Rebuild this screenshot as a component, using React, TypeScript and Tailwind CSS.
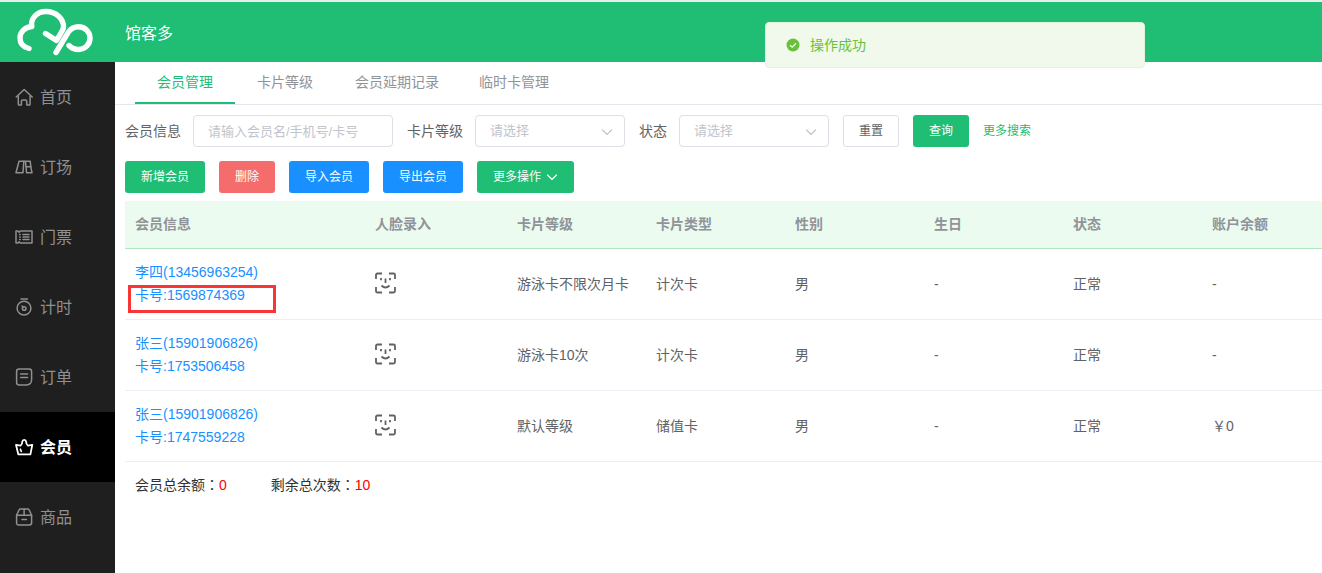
import React, { useState } from 'react';
import type { ReactNode } from 'react';

type IconProps = { children: ReactNode };

const MenuIcon = ({ children }: IconProps) => (
  <svg
    viewBox="0 0 20 20"
    className="size-5 shrink-0"
    fill="none"
    stroke="currentColor"
    strokeWidth="1.5"
    strokeLinecap="round"
    strokeLinejoin="round"
    aria-hidden="true"
  >
    {children}
  </svg>
);

const menus = [
  {
    name: '首页',
    icon: (
      <MenuIcon>
        <path d="M2.2 10 10.2 2.5 18.2 10" />
        <path d="M4.3 9v8.2q0 .8.8.8h2.3v-3.6q0-1.4 1.4-1.4h2.6q1.4 0 1.4 1.4V18h2.5q.8 0 .8-.8V9" />
      </MenuIcon>
    ),
  },
  {
    name: '订场',
    icon: (
      <MenuIcon>
        <path d="M5 4.2h4.800L9 15.800H2z" />
        <path d="M9.800 4.200h6.400l.6 5.400 1.200 6.200h-5.400L11.400 4.200" />
        <path d="M12.200 9.800h4.600" />
      </MenuIcon>
    ),
  },
  {
    name: '门票',
    icon: (
      <MenuIcon>
        <path d="M2 4h2l1.200 1.200L6.400 4H18v12H6.400l-1.200-1.200L4 16H2z" />
        <path d="M9 7.500h6M9 10h6M9 12.500h6M5.600 7.500h.6M5.600 10h.6M5.600 12.500h.6" />
      </MenuIcon>
    ),
  },
  {
    name: '计时',
    icon: (
      <MenuIcon>
        <circle cx="10" cy="11.200" r="6.900" />
        <circle cx="10.200" cy="11.500" r="1.800" />
        <path d="M7 2h6.400M8 9l1 1" />
      </MenuIcon>
    ),
  },
  {
    name: '订单',
    icon: (
      <MenuIcon>
        <path d="M5 2h10.200q2.400 0 2.400 2.400v8.200q0 5.400-5.400 5.400H5q-2.400 0-2.400-2.400V4.400Q2.600 2 5 2z" />
        <path d="M6.600 7h7M6.600 10.400h7" />
      </MenuIcon>
    ),
  },
  {
    name: '会员',
    icon: (
      <MenuIcon>
        <path
          strokeWidth="1.8"
          d="M2 7.800 6.500 8.600Q8.300 7.600 8.300 4.600 8.500 2.800 10.200 2.800T12.100 4.600Q12.100 7.600 14 8.600L18.300 7.800 16.400 17.400H4.300z"
        />
        <path strokeWidth="1.6" d="M6.400 12.200 7.300 14.400" />
      </MenuIcon>
    ),
  },
  {
    name: '商品',
    icon: (
      <MenuIcon>
        <path d="M2.600 8.200 5 3Q5.500 2 6.600 2h7q1.100 0 1.600 1l2.400 5.200v7.600q0 2.200-2.200 2.200H4.800q-2.200 0-2.200-2.200z" />
        <path d="M2.600 8.200h15M10.100 2v6M8 12.600h4.400" />
      </MenuIcon>
    ),
  },
];

const tabs = ['会员管理', '卡片等级', '会员延期记录', '临时卡管理'];

const columns = [
  { title: '会员信息', width: 'w-60' },
  { title: '人脸录入', width: 'w-[142px]' },
  { title: '卡片等级', width: 'w-[139px]' },
  { title: '卡片类型', width: 'w-[139px]' },
  { title: '性别', width: 'w-[139px]' },
  { title: '生日', width: 'w-[139px]' },
  { title: '状态', width: 'w-[139px]' },
  { title: '账户余额', width: '' },
];

const members = [
  { name: '李四', phone: '13456963254', card: '1569874369', level: '游泳卡不限次月卡', type: '计次卡', balance: '-', marked: true },
  { name: '张三', phone: '15901906826', card: '1753506458', level: '游泳卡10次', type: '计次卡', balance: '-', marked: false },
  { name: '张三', phone: '15901906826', card: '1747559228', level: '默认等级', type: '储值卡', balance: '￥0', marked: false },
];

const totals = [
  { label: '会员总余额', value: '0' },
  { label: '剩余总次数', value: '10' },
];

const Logo = () => (
  <svg viewBox="0 0 78 50" className="h-[50px] w-[78px]" fill="none" stroke="#fff" strokeWidth="5.400" strokeLinecap="round" strokeLinejoin="round" aria-label="馆客多">
    <path d="M13 41.500C7 40 4 36 4 31 4 25 9 20 15.800 19.500 14.500 11 21 4.500 30 4.500 40 4.500 48 12 47.500 20.500 47 23 45.500 25 40.500 33.500L29.500 26.500" />
    <path d="M40 45.500 52.500 24.800C55.500 21 59 19.800 62.500 19.800 69 19.800 74 25 74 31 74 37.500 69 42.500 62.500 42.500 58.500 42.500 55.500 41 53 38.500" />
  </svg>
);

const Chevron = () => (
  <svg viewBox="0 0 12 12" className="size-3 shrink-0" fill="none" stroke="currentColor" strokeWidth="1.200" strokeLinecap="round" aria-hidden="true">
    <path d="M1.500 4 6 8.500 10.500 4" />
  </svg>
);

const FaceIcon = () => (
  <svg viewBox="0 0 22 22" className="size-[22px]" fill="none" stroke="#606266" strokeWidth="1.800" aria-hidden="true">
    <path d="M1 7V3q0-1.500 1.500-1.500H7M14 1.500h4.500q1.500 0 1.500 1.500v4M20 15v4q0 1.500-1.500 1.500H14M7 20.500H2.500Q1 20.500 1 19v-4" />
    <path d="M6 6v2.200M15 6v2.200M10.500 6.500v4.500M6.500 13.500q4 4 8 0" />
  </svg>
);

type SelectProps = { id: string; label: string };

const FilterSelect = ({ id, label }: SelectProps) => (
  <div className="flex items-center gap-3">
    <label htmlFor={id}>{label}</label>
    <div className="relative">
      <select
        id={id}
        className="h-8 w-[150px] appearance-none rounded border border-[#dcdfe6] bg-white px-3.5 text-[13px] text-[#c0c4cc] outline-none"
      >
        <option>请选择</option>
      </select>
      <span className="pointer-events-none absolute top-[11px] right-3 text-[#c0c4cc]">
        <Chevron />
      </span>
    </div>
  </div>
);

const App = () => {
  const [activeTab, setActiveTab] = useState('会员管理');
  const [keyword, setKeyword] = useState('');

  return (
    <div className="relative flex min-h-screen flex-col overflow-hidden bg-white font-['Liberation_Sans','Noto_Sans_CJK_SC',sans-serif] text-sm text-[#606266]">
      <header className="flex h-[62px] shrink-0 items-center border-t-2 border-[#e9edeb] bg-[#20bd74] text-base text-white">
        <div className="w-[115px] shrink-0 pl-4">
          <Logo />
        </div>
        <h1 className="pt-1 pl-2.5">馆客多</h1>
      </header>

      {/* Success message */}
      <div
        role="status"
        className="absolute top-[22px] right-[177px] z-10 flex h-[46px] w-[380px] items-center gap-2.5 rounded border border-[#e1f3d8] bg-[#f0f9eb] px-5 text-[#67c23a]"
      >
        <svg viewBox="0 0 14 14" className="size-3.5" aria-hidden="true">
          <circle cx="7" cy="7" r="6.500" fill="currentColor" />
          <path d="M4 7.200 6.200 9.200 10 5.200" fill="none" stroke="#f0f9eb" strokeWidth="1.300" />
        </svg>
        <p>操作成功</p>
      </div>

      <div className="flex flex-1">
        <nav className="w-[115px] shrink-0 bg-[#1f1f1f] text-base">
          {menus.map((menu) => (
            <a
              key={menu.name}
              href="#"
              className={
                menu.name === '会员'
                  ? 'flex h-[70px] items-center gap-1.5 bg-black pl-3.5 font-bold text-white'
                  : 'flex h-[70px] items-center gap-1.5 pl-3.5 text-[#909090]'
              }
            >
              {menu.icon}
              <span className="pt-0.5">{menu.name}</span>
            </a>
          ))}
        </nav>

        <main className="min-w-0 flex-1">
          <div role="tablist" className="flex border-b border-[#e4e7ed] px-5">
            {tabs.map((tab) => (
              <button
                key={tab}
                role="tab"
                aria-selected={tab === activeTab}
                onClick={() => setActiveTab(tab)}
                className={
                  tab === activeTab
                    ? 'h-[42px] min-w-[100px] border-b-2 border-[#20bd74] px-5 text-[#20bd74]'
                    : 'h-[42px] min-w-[100px] border-b-2 border-transparent px-5 text-[#909399]'
                }
              >
                {tab}
              </button>
            ))}
          </div>

          <div className="pt-2.5 pl-2.5">
            {/* Filters */}
            <form className="flex flex-wrap items-center gap-3.5" onSubmit={(e) => e.preventDefault()}>
              <div className="flex items-center gap-3">
                <label htmlFor="keyword">会员信息</label>
                <input
                  id="keyword"
                  type="text"
                  value={keyword}
                  onChange={(e) => setKeyword(e.target.value)}
                  placeholder="请输入会员名/手机号/卡号"
                  className="h-8 w-[200px] rounded border border-[#dcdfe6] px-3.5 text-[13px] outline-none placeholder:text-[#c0c4cc]"
                />
              </div>
              <FilterSelect id="level" label="卡片等级" />
              <FilterSelect id="state" label="状态" />
              <button type="reset" className="h-8 w-14 rounded-[3px] border border-[#dcdfe6] text-xs">重置</button>
              <button type="submit" className="h-8 w-14 rounded-[3px] bg-[#20bd74] text-xs text-white">查询</button>
              <a href="#" className="text-xs text-[#20bd74]">更多搜索</a>
            </form>

            {/* Actions */}
            <div className="mt-3.5 flex flex-wrap gap-3.5 text-xs text-white">
              <button className="h-8 rounded-[3px] bg-[#20bd74] px-4">新增会员</button>
              <button className="h-8 rounded-[3px] bg-[#f56c6c] px-4">删除</button>
              <button className="h-8 rounded-[3px] bg-[#1890ff] px-4">导入会员</button>
              <button className="h-8 rounded-[3px] bg-[#1890ff] px-4">导出会员</button>
              <button className="flex h-8 items-center gap-[5px] rounded-[3px] bg-[#20bd74] px-4">
                更多操作
                <Chevron />
              </button>
            </div>

            <table className="mt-2 w-full table-fixed border-separate border-spacing-0 text-left">
              <thead className="bg-[#ebfbf0] text-[#909399]">
                <tr>
                  {columns.map((col) => (
                    <th key={col.title} className={`${col.width} h-12 border-b border-[#b1e4c3] px-2.5 pb-0.5 font-bold`}>
                      {col.title}
                    </th>
                  ))}
                </tr>
              </thead>
              <tbody>
                {members.map((m) => (
                  <tr key={m.card} className="*:border-b *:border-[#ebeef5] *:px-2.5 *:py-3">
                    <td className="leading-[23px] text-[#1890ff]">
                      <a href="#" className="block">{m.name}({m.phone})</a>
                      <a href="#" className="relative block">
                        卡号:{m.card}
                        {m.marked && <span className="absolute top-px -left-[7px] h-7 w-[148px] border-3 border-[#f93535]" />}
                      </a>
                    </td>
                    <td>
                      <button aria-label="人脸录入" className="block pb-0.5">
                        <FaceIcon />
                      </button>
                    </td>
                    <td className="whitespace-nowrap">{m.level}</td>
                    <td>{m.type}</td>
                    <td>男</td>
                    <td>-</td>
                    <td>正常</td>
                    <td>{m.balance}</td>
                  </tr>
                ))}
              </tbody>
            </table>

            <div className="flex gap-11 px-2.5 pt-3 text-[#303133]">
              {totals.map((t) => (
                <p key={t.label}>
                  {t.label}
                  <span className="font-['Noto_Sans_CJK_TC',sans-serif]">：</span>
                  <span className="text-[#ff0000]">{t.value}</span>
                </p>
              ))}
            </div>
          </div>
        </main>
      </div>
    </div>
  );
};

export default App;
